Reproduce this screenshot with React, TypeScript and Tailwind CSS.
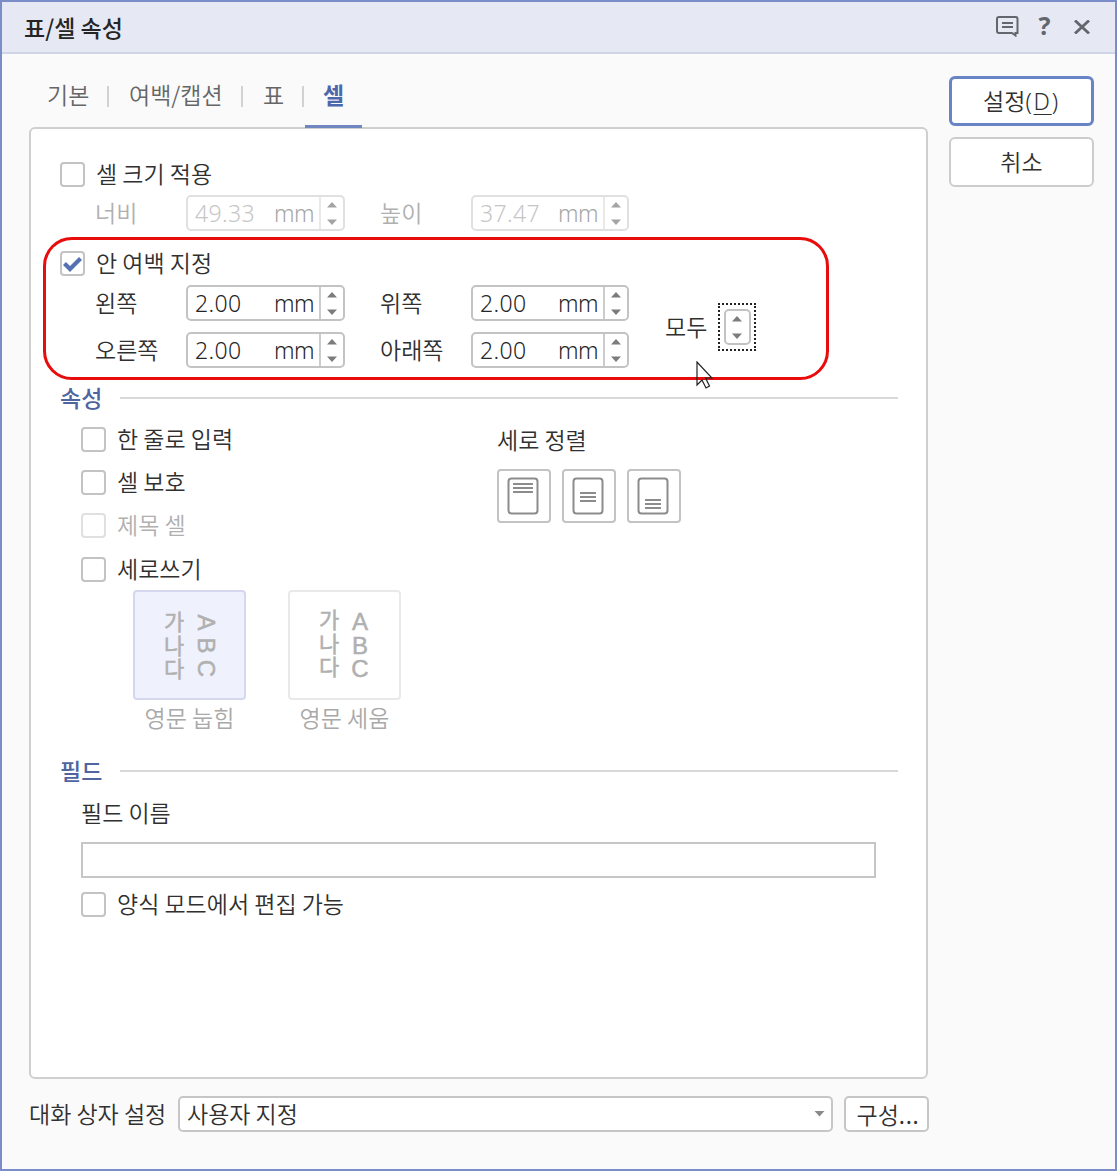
import React from "react";

const KR = "font-['Noto_Sans_CJK_KR',sans-serif] font-[350] text-[23px] leading-6 whitespace-nowrap";
const NUM = "font-['Noto_Sans',sans-serif] font-[350] text-[23px] leading-6";

function Arrows({ dim = false }: { dim?: boolean }) {
  return (
    <svg width="12" height="26" viewBox="0 0 12 26" className={`shrink-0 ${dim ? "fill-[#a4a4a4]" : "fill-[#7c7c7c]"}`}>
      <path d="M1 7.500 6 2l5 5.500zM1 19.500 6 25l5-5.500z" />
    </svg>
  );
}

function Checkbox({ label, checked = false, disabled = false }: { label: string; checked?: boolean; disabled?: boolean }) {
  return (
    <div className="flex h-[25px] items-center">
      <div className={`flex size-[25px] shrink-0 items-center justify-center rounded-[4px] border-2 bg-white ${disabled ? "border-[#e0e0e0]" : "border-[#c3c3c3]"}`}>
        {checked && (
          <svg width="19" height="17" viewBox="0 0 19 17" fill="none" stroke="#5670b4" strokeWidth="4.200" className="translate-y-px">
            <path d="M1.500 7.500 7 13 17.500 2.500" />
          </svg>
        )}
      </div>
      <span className={`mb-[3px] ml-[11px] ${KR} ${disabled ? "text-[#b0b0b0]" : "text-[#303030]"}`}>{label}</span>
    </div>
  );
}

function Spin({ value, disabled = false, wide = false }: { value: string; disabled?: boolean; wide?: boolean }) {
  return (
    <div
      className={`flex h-9 shrink-0 rounded-[5px] border-2 bg-white ${wide ? "w-[159px]" : "w-[158px]"} ${
        disabled ? "border-[#e0e0e0] text-[#c6c6c6]" : "border-[#c3c3c3] text-[#262626]"
      }`}
    >
      <div className={`flex flex-1 items-center justify-between pr-[5px] pl-[7px] ${NUM}`}>
        <span className="tracking-[0.400px]">{value}</span>
        <span className={`tracking-[-0.600px] ${disabled ? "text-[#a6a6a6]" : ""}`}>mm</span>
      </div>
      <div className={`flex w-6 items-center justify-center border-l-2 ${disabled ? "border-[#e9e9e9]" : "border-[#cccccc]"}`}>
        <Arrows dim={disabled} />
      </div>
    </div>
  );
}

function SpinRow({ a, b, va, vb, disabled = false }: { a: string; b: string; va: string; vb: string; disabled?: boolean }) {
  const color = disabled ? "text-[#b0b0b0]" : "text-[#303030]";
  return (
    <div className="ml-[35px] flex h-9 items-center">
      <span className={`mb-[3px] w-[91px] ${KR} ${color}`}>{a}</span>
      <Spin value={va} disabled={disabled} wide />
      <span className={`mb-[3px] ml-[35px] w-[91px] ${KR} ${color}`}>{b}</span>
      <Spin value={vb} disabled={disabled} />
    </div>
  );
}

function Section({ title }: { title: string }) {
  return (
    <div className="flex h-6 items-center">
      <span className={`mb-[2px] w-[60px] ${KR} font-medium! text-[#4f659f]`}>{title}</span>
      <div className="h-[2px] flex-1 bg-[#d8d8d8]" />
    </div>
  );
}

function AlignIcon({ y, x1, x2 }: { y: number; x1: number; x2: number }) {
  return (
    <div className="flex size-[54px] items-center justify-center rounded-[4px] border-2 border-[#c3c3c3] bg-white">
      <svg width="32" height="38" viewBox="0 0 32 38" fill="none" stroke="#8c8c8c" strokeWidth="2" className="-translate-x-px">
        <rect x="1.500" y="1.500" width="29" height="35" rx="3" />
        <path d={`M${x1} ${y}H${x2}M${x1} ${y + 4}H${x2}M${x1} ${y + 8}H${x2}`} />
      </svg>
    </div>
  );
}

function DirectionTile({ label, active = false }: { label: string; active?: boolean }) {
  return (
    <div className="flex w-[113px] flex-col items-center">
      <div
        className={`flex h-[110px] w-[113px] justify-center gap-[10px] rounded-[4px] border-2 pt-[18px] text-[#b0b0b0] ${
          active ? "border-[#d5d7ee] bg-[#eff2fc]" : "border-[#e9e9e9] bg-white"
        }`}
      >
        <div className={`flex w-[21px] flex-col pl-px font-['Liberation_Sans','Noto_Sans_CJK_KR',sans-serif] text-[22px] leading-[24px] [-webkit-text-stroke:0.500px_#b0b0b0] ${active ? "mt-px" : "-mt-px"}`}>
          <span className="block h-[23.500px]">가</span>
          <span className="block h-[23.500px]">나</span>
          <span className="block h-[23.500px]">다</span>
        </div>
        <div className={`flex w-[22px] flex-col items-center font-['Liberation_Sans',sans-serif] text-[24px] leading-[24px] [-webkit-text-stroke:0.500px_#b0b0b0] ${active ? "mt-px" : ""}`}>
          {["A", "B", "C"].map((c) => (
            <span key={c} className={active ? "flex h-[23px] w-6 translate-x-px rotate-90 items-center justify-center" : "h-[23.500px]"}>
              {c}
            </span>
          ))}
        </div>
      </div>
      <span className={`mt-[5px] mb-px ${KR} text-[#a9a9a9]`}>{label}</span>
    </div>
  );
}

function TitleBar() {
  return (
    <header className="flex h-[52px] shrink-0 items-center border-b-2 border-[#cfd5e6] bg-[#e6e9f4] pl-[22px]">
      <h1 className={`${KR} flex-1 font-medium! text-[#252525]`}>표/셀 속성</h1>
      <div className="mr-[25px] flex items-center text-[#64666d]">
        <svg width="23" height="21" viewBox="0 0 23 21" fill="none" stroke="currentColor" strokeWidth="2" className="-translate-x-px -translate-y-px">
          <path d="M16 17H3a2 2 0 0 1-2-2V3a2 2 0 0 1 2-2h16.500a2 2 0 0 1 2 2v14h-2v2.500z" />
          <path d="M6 7h11M6 11h11" />
        </svg>
        <span className="-mt-[4px] ml-[15px] w-[19px] text-center font-['Noto_Sans',sans-serif] text-[25px] leading-6 font-bold">?</span>
        <svg width="16" height="14" viewBox="0 0 16 14" className="ml-[20px]" fill="none" stroke="currentColor" strokeWidth="2.800">
          <path d="M1 0.500 15 13.500M15 0.500 1 13.500" />
        </svg>
      </div>
    </header>
  );
}

function Tabs() {
  return (
    <nav className={`flex h-[74px] items-center pt-[5px] pl-[18px] text-[#666666] ${KR}`}>
      <span className="w-[60px]">기본</span>
      <i className="mt-[6px] mr-[20px] h-[21px] w-[2px] bg-[#d2d2d2]" />
      <span className="w-[112px]">여백/캡션</span>
      <i className="mt-[6px] mr-[20px] h-[21px] w-[2px] bg-[#d2d2d2]" />
      <span className="w-[39px]">표</span>
      <i className="mt-[6px] mr-[19px] h-[21px] w-[2px] bg-[#d2d2d2]" />
      <span className="font-bold text-[#4d67ac]">셀</span>
    </nav>
  );
}

export default function App() {
  return (
    <div className="relative flex h-[1171px] w-[1117px] flex-col overflow-hidden border-2 border-[#7a8dc8] bg-[#fafafa]">
      <TitleBar />
      <main className="flex pl-[27px]">
        <div className="w-[899px]">
          <Tabs />
          <section className="relative mt-[-1px] h-[952px] rounded-[6px] border-2 border-[#cfcfcf] bg-white pt-[33px] pl-[29px]">
            <i className="absolute -top-[4px] left-[274px] h-[3px] w-[57px] bg-[#6f86c1]" />
            <Checkbox label="셀 크기 적용" />
            <div className="mt-2">
              <SpinRow a="너비" b="높이" va="49.33" vb="37.47" disabled />
            </div>
            <div className="mt-5">
              <Checkbox label="안 여백 지정" checked />
            </div>
            <div className="mt-[9px] flex items-center">
              <div className="flex flex-col gap-[11px]">
                <SpinRow a="왼쪽" b="위쪽" va="2.00" vb="2.00" />
                <SpinRow a="오른쪽" b="아래쪽" va="2.00" vb="2.00" />
              </div>
              <span className={`mb-[2px] ml-9 ${KR} text-[#303030]`}>모두</span>
              <div className="ml-[11px] flex h-[48px] w-[38px] items-center justify-center border-2 border-dotted border-[#222]">
                <div className="flex h-9 w-[27px] shrink-0 items-center justify-center rounded-[5px] border-2 border-[#c3c3c3]">
                  <Arrows />
                </div>
              </div>
            </div>
            <div className="mt-[18px] mr-[28px]">
              <Section title="속성" />
            </div>
            <div className="mt-[17px] ml-[21px] flex">
              <div className="w-[416px]">
                <div className="flex flex-col gap-[18px]">
                  <Checkbox label="한 줄로 입력" />
                  <Checkbox label="셀 보호" />
                  <Checkbox label="제목 셀" disabled />
                  <div className="mt-px">
                    <Checkbox label="세로쓰기" />
                  </div>
                </div>
                <div className="mt-2 ml-[52px] flex gap-[42px]">
                  <DirectionTile label="영문 눕힘" active />
                  <DirectionTile label="영문 세움" />
                </div>
              </div>
              <div>
                <div className={`${KR} text-[#303030]`}>세로 정렬</div>
                <div className="mt-[18px] flex gap-[11px]">
                  <AlignIcon y={7} x1={6} x2={26} />
                  <AlignIcon y={16} x1={8} x2={24} />
                  <AlignIcon y={23} x1={8} x2={24} />
                </div>
              </div>
            </div>
            <div className="mt-[29px] mr-[28px]">
              <Section title="필드" />
            </div>
            <div className="ml-[21px]">
              <div className={`mt-[17px] ${KR} text-[#303030]`}>필드 이름</div>
              <div className="mt-[18px] mb-[14px] h-9 w-[795px] border-2 border-[#c6c6c6] bg-white" />
              <Checkbox label="양식 모드에서 편집 가능" />
            </div>
            <div className="pointer-events-none absolute top-[108px] left-[12px] h-[143px] w-[786px] rounded-[29px] border-[3px] border-[#e80c0c]" />
            <svg width="17" height="28" viewBox="0 0 17 28" className="absolute top-[232px] left-[665px]" fill="none" stroke="#222" strokeWidth="1.200">
              <path d="M1 1v23l5-5 4 8 3.500-2-4-8H16z" />
            </svg>
          </section>
          <div className="mt-[17px] flex h-9 w-[900px] items-center">
            <span className={`mb-[2px] w-[149px] shrink-0 ${KR} text-[#303030]`}>대화 상자 설정</span>
            <div className={`flex h-9 w-[655px] shrink-0 items-center justify-between rounded-[5px] border-2 border-[#c6c6c6] bg-white pr-[6px] pl-[7px] ${KR} text-[#303030]`}>
              <span className="mb-[2px]">사용자 지정</span>
              <svg width="11" height="6" viewBox="0 0 11 6" className="fill-[#8a8a8a]">
                <path d="M0.500 0h10L5.500 5.500z" />
              </svg>
            </div>
            <button className={`ml-[11px] h-9 w-[85px] shrink-0 rounded-[5px] border-2 border-[#c6c6c6] bg-white pl-[3px] ${KR} text-[#303030]`}>
              구성<span className="font-['Noto_Sans',sans-serif] font-normal tracking-[0.700px]">...</span>
            </button>
          </div>
        </div>
        <aside className={`mt-[22px] ml-[21px] flex w-[145px] flex-col gap-[11px] text-[#303030] ${KR}`}>
          <button className="h-[50px] rounded-[6px] border-[3px] border-[#6883c6] bg-white pb-px">
            설정<span className="font-['Noto_Sans',sans-serif] tracking-[1.800px]">(<span className="underline decoration-1 underline-offset-4">D</span>)</span>
          </button>
          <button className="h-[50px] rounded-[6px] border-2 border-[#cccccc] bg-white pb-[3px]">취소</button>
        </aside>
      </main>
    </div>
  );
}
